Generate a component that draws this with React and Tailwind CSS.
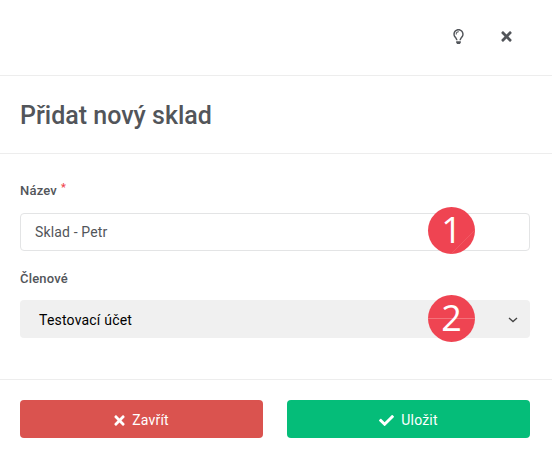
import { FaCheck, FaRegLightbulb, FaTimes } from 'react-icons/fa'

function Marker({ number, line, className }) {
  return (
    <span className={`absolute w-[47px] h-[47px] rounded-full bg-[#ef4452]
      flex items-center justify-center text-white text-[36px] leading-none font-['Open_Sans',sans-serif] tracking-normal ${className}`}>
      <svg viewBox="0 0 47 47" fill="none" strokeWidth="1" className="absolute inset-0 w-full h-full rounded-full overflow-hidden">
        {line}
      </svg>
      <span className="relative pb-[2px]">{number}</span>
    </span>
  )
}

export default function App() {
  return (
    <div className="w-[552px] h-[457px] bg-white text-[#52555a] font-['Roboto',sans-serif] text-sm overflow-hidden">
      <header className="h-[76px] border-b border-[#ededed] flex items-start justify-end pt-[29px] pr-[40px] gap-[37px]">
        <button aria-label="Nápověda">
          <FaRegLightbulb className="h-[15px] w-[11px]" />
        </button>
        <button aria-label="Zavřít">
          <FaTimes className="h-[15px] w-[11px]" />
        </button>
      </header>

      <div className="h-[78px] border-b border-[#ededed] px-5 pt-[2px] flex items-center">
        <h1 className="text-[25px] font-medium leading-none">Přidat nový sklad</h1>
      </div>

      <form className="h-[226px] border-b border-[#ededed] px-5 pt-[27px]">
        <label className="block h-[32px] text-[13px] leading-5 font-medium tracking-[0.2px]">
          Název <span className="relative -top-[4px] left-[0.5px] text-[11px] leading-none text-[#f0444f]">*</span>
        </label>
        <div className="relative h-[38px] w-[510px] rounded border border-[#e3e4e5] px-[14px] flex items-center tracking-[0.15px]">
          Sklad - Petr
          <Marker number="1" line={<path d="M23 47 L47 23" stroke="#f15863" />} className="-top-[7px] left-[407px]" />
        </div>

        <label className="block h-[49px] pt-[18px] text-[13px] leading-5 font-medium tracking-[0.2px]">Členové</label>
        <div className="relative h-[38px] w-[510px] rounded bg-[#f0f0f0] pt-px pl-[19px] pr-[12px] flex items-center justify-between text-black tracking-[0.2px]">
          Testovací účet
          <svg viewBox="0 0 10 6" fill="none" stroke="#444" strokeWidth="1.3" className="w-[10px] h-[6px]">
            <path d="M1 1 L5 4.6 L9 1" />
          </svg>
          <Marker number="2" line={<path d="M0 23.5 H47" stroke="#f3727b" />} className="-top-[5px] left-[408px]" />
        </div>
      </form>

      <footer className="px-5 pt-5 flex gap-6 text-white tracking-[0.2px]">
        <button className="h-[38px] w-[243px] rounded bg-[#da534f] pt-[2px] flex items-center justify-center gap-[7px]">
          <FaTimes className="h-[15px] w-[11px]" />
          Zavřít
        </button>
        <button className="h-[38px] w-[243px] rounded bg-[#05bd79] pt-[2px] flex items-center justify-center gap-[7px]">
          <FaCheck className="h-[15px] w-[15px]" />
          Uložit
        </button>
      </footer>
    </div>
  )
}
